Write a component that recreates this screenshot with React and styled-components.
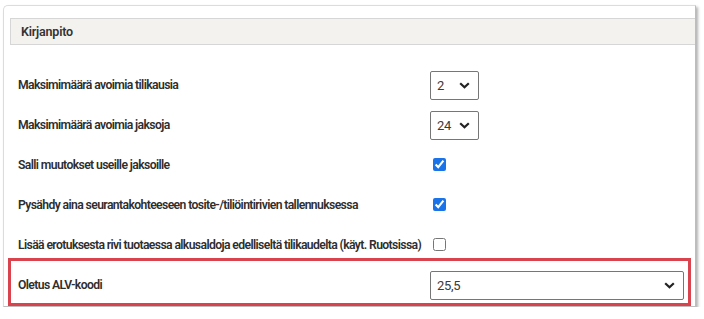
import React from "react";
import styled, { createGlobalStyle } from "styled-components";

const GlobalStyle = createGlobalStyle`
  body {
    margin: 0;
    background: #fff;
    font-family: Roboto, "Liberation Sans", sans-serif;
    color: #333;
  }
`;

const Frame = styled.div`
  margin: 5px 8px 0 3px;
  height: 302px;
  box-sizing: border-box;
  border: 1px solid #dcdcdc;
  border-radius: 5px 0 0 0;
  border-right: 1px solid #bdbdbd;
  border-bottom: 1px solid #bdbdbd;
  box-shadow: 2px 2px 3px rgba(0, 0, 0, 0.3);
  padding: 12px 0 0 6px;
  background: #fff;
`;

const Header = styled.div`
  height: 25px;
  display: flex;
  align-items: center;
  padding-left: 10px;
  background: #f4f2ee;
  border: 1px solid #d6d6d6;
  border-right: none;
  font-size: 12.5px;
  font-weight: 600;
  color: #333;
  letter-spacing: -0.2px;
`;

const Rows = styled.div`
  padding: 20px 11px 0 8px;
`;

const Row = styled.div`
  position: relative;
  height: 40px;
  display: grid;
  grid-template-columns: 412px 1fr;
  align-items: center;

  ${({ $highlight }) =>
    $highlight &&
    `
    &::after {
      content: "";
      position: absolute;
      top: -7px;
      bottom: -1px;
      left: -10px;
      right: -7px;
      border: 3px solid #d9434e;
      pointer-events: none;
    }
  `}
`;

const Label = styled.span`
  font-size: 12.2px;
  font-weight: 600;
  color: #2e2e2e;
  letter-spacing: -0.62px;
  white-space: nowrap;
`;

const Select = styled.div`
  width: ${({ $wide }) => ($wide ? "100%" : "49px")};
  height: 29px;
  box-sizing: border-box;
  border: 1px solid #767676;
  border-radius: 2px;
  display: flex;
  align-items: center;
  justify-content: space-between;
  padding: 0 8px 0 6px;
  font-size: 13px;
  letter-spacing: -0.3px;
  color: #3a3a3a;
  background: #fff;
`;

const Check = styled.input`
  width: 13px;
  height: 13px;
  margin: 0 0 0 3px;
  accent-color: #1a73e8;
`;

const Chevron = () => (
  <svg width="11" height="7" viewBox="0 0 11 7">
    <path d="M1.2 1.2 L5.5 5.3 L9.8 1.2" fill="none" stroke="#222" strokeWidth="2.2" />
  </svg>
);

const rows = [
  { label: "Maksimimäärä avoimia tilikausia", type: "select", value: "2" },
  { label: "Maksimimäärä avoimia jaksoja", type: "select", value: "24" },
  { label: "Salli muutokset useille jaksoille", type: "check", checked: true },
  { label: "Pysähdy aina seurantakohteeseen tosite-/tiliöintirivien tallennuksessa", type: "check", checked: true },
  { label: "Lisää erotuksesta rivi tuotaessa alkusaldoja edelliseltä tilikaudelta (käyt. Ruotsissa)", type: "check", checked: false },
  { label: "Oletus ALV-koodi", type: "select", value: "25,5", wide: true, highlight: true },
];

export default function App() {
  return (
    <>
      <GlobalStyle />
      <Frame>
        <Header>Kirjanpito</Header>
        <Rows>
          {rows.map((r) => (
            <Row key={r.label} $highlight={r.highlight}>
              <Label>{r.label}</Label>
              <div>
                {r.type === "select" ? (
                  <Select $wide={r.wide}>
                    <span>{r.value}</span>
                    <Chevron />
                  </Select>
                ) : (
                  <Check type="checkbox" defaultChecked={r.checked} />
                )}
              </div>
            </Row>
          ))}
        </Rows>
      </Frame>
    </>
  );
}
